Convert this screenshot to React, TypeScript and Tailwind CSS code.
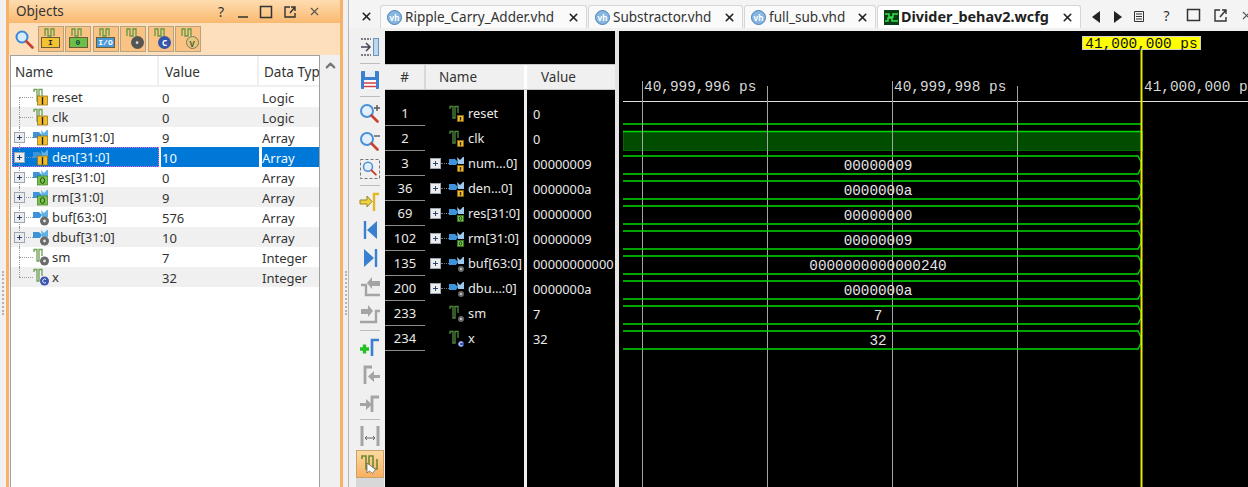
import type { ReactNode } from 'react'
import { ChevronUp, X } from 'lucide-react'

const sans = "font-['Noto_Sans',sans-serif]"

type Kind = 'in' | 'out' | 'sig' | 'const'

const objects: { name: string; value: string; type: string; kind: Kind; bus?: boolean }[] = [
  { name: 'reset', value: '0', type: 'Logic', kind: 'in' },
  { name: 'clk', value: '0', type: 'Logic', kind: 'in' },
  { name: 'num[31:0]', value: '9', type: 'Array', kind: 'in', bus: true },
  { name: 'den[31:0]', value: '10', type: 'Array', kind: 'in', bus: true },
  { name: 'res[31:0]', value: '0', type: 'Array', kind: 'out', bus: true },
  { name: 'rm[31:0]', value: '9', type: 'Array', kind: 'out', bus: true },
  { name: 'buf[63:0]', value: '576', type: 'Array', kind: 'sig', bus: true },
  { name: 'dbuf[31:0]', value: '10', type: 'Array', kind: 'sig', bus: true },
  { name: 'sm', value: '7', type: 'Integer', kind: 'sig' },
  { name: 'x', value: '32', type: 'Integer', kind: 'const' },
]

const waves: { num: string; name: string; value: string; kind: Kind; bus?: boolean; text?: string }[] = [
  { num: '1', name: 'reset', value: '0', kind: 'in' },
  { num: '2', name: 'clk', value: '0', kind: 'in' },
  { num: '3', name: 'num…0]', value: '00000009', kind: 'in', bus: true, text: '00000009' },
  { num: '36', name: 'den…0]', value: '0000000a', kind: 'in', bus: true, text: '0000000a' },
  { num: '69', name: 'res[31:0]', value: '00000000', kind: 'out', bus: true, text: '00000000' },
  { num: '102', name: 'rm[31:0]', value: '00000009', kind: 'out', bus: true, text: '00000009' },
  { num: '135', name: 'buf[63:0]', value: '00000000000', kind: 'sig', bus: true, text: '0000000000000240' },
  { num: '200', name: 'dbu…:0]', value: '0000000a', kind: 'sig', bus: true, text: '0000000a' },
  { num: '233', name: 'sm', value: '7', kind: 'sig', text: '7' },
  { num: '234', name: 'x', value: '32', kind: 'const', text: '32' },
]

function Badge({ kind, small }: { kind: Kind; small?: boolean }) {
  const cx = small ? 11.5 : 9.5
  const cy = small ? 13.5 : 12.5
  const r = small ? 3 : 5
  if (kind === 'in' || kind === 'out') {
    const fill = kind === 'in' ? '#f4bc28' : '#78c34e'
    const line = kind === 'in' ? '#8a6a10' : '#3c7d22'
    return (
      <g>
        <rect x={cx - r} y={cy - r + (small ? 0 : 0.5)} width={r * 2} height={r * 2 - (small ? 0 : 1)} fill={fill} stroke={line} strokeWidth=".7" />
        {kind === 'in' ? (
          <path d={`M${cx} ${cy - r + 1.5}V${cy + r - 1}`} stroke="#222" strokeWidth="1.4" />
        ) : (
          <ellipse cx={cx} cy={cy} rx={r / 2.4} ry={r / 1.7} fill="none" stroke="#1d3d12" strokeWidth=".9" />
        )}
      </g>
    )
  }
  const x = small ? 12 : 11.5
  const y = small ? 14 : 13
  if (kind === 'const') {
    return (
      <g>
        <circle cx={x} cy={y} r={small ? 3 : 4.5} fill="#3a55b0" />
        <path d={`M${x + 1.5} ${y - 1.5}a2 2 0 1 0 0 3`} fill="none" stroke="#fff" strokeWidth=".9" />
      </g>
    )
  }
  return (
    <g>
      <circle cx={x} cy={y} r={small ? 3 : 4.5} fill="#6a6a6a" />
      <circle cx={x} cy={y} r={small ? 0.9 : 1.4} fill="#e4e4e4" />
    </g>
  )
}

function SignalIcon({ kind, bus, small }: { kind: Kind; bus?: boolean; small?: boolean }) {
  return (
    <svg width="16" height="18" viewBox="0 0 16 18" className="shrink-0">
      {bus ? (
        <g>
          <path d="M0 4h6l3 3-2 3H0z" fill="#3d94dc" />
          <path d="M8 2l3 3 3-3h1v7h-6z" fill={small ? '#9cc8ec' : '#5fb0e4'} />
        </g>
      ) : (
        <path d="M1 4V1.5h3V13h2V1.5h3V8" fill="none" stroke={small ? '#4f8a3a' : '#6d9e55'} strokeWidth="1.3" />
      )}
      <Badge kind={kind} small={small} />
    </svg>
  )
}

function Expander() {
  return (
    <span className="relative block w-[11px] h-[11px] border border-[#9aa6b2] bg-[#ececec] shrink-0">
      <span className="absolute left-[2px] top-[4px] w-[5px] h-px bg-[#2c4470]" />
      <span className="absolute left-[4px] top-[2px] w-px h-[5px] bg-[#2c4470]" />
    </span>
  )
}

function FilterButton({ kind, label }: { kind: string; label: string }) {
  const boxes: Record<string, string> = {
    I: 'bg-[#f3c230] text-[#222]',
    O: 'bg-[#6cc04a] text-[#143]',
    IO: 'bg-[#4a9ad8] text-white',
  }
  return (
    <div className="w-[26px] h-[26px] bg-[#fac383] border border-[#b9a27e] flex flex-col items-center shrink-0">
      <svg width="18" height="9" viewBox="0 0 18 9" className="shrink-0 mt-px">
        <path d="M3 8V1h3v7h3V1h3v7" fill="none" stroke="#5f9a45" strokeWidth="1.3" />
      </svg>
      {boxes[kind] ? (
        <span className={`${boxes[kind]} w-[19px] h-[11px] border border-[#6b5b3a] text-[8px] leading-[9px] text-center font-['Liberation_Mono',monospace] font-bold`}>{label}</span>
      ) : (
        <span
          className={`w-[13px] h-[13px] -mt-[1px] ml-[8px] rounded-full text-[8px] leading-[13px] text-center font-bold ${
            kind === 'dot' ? 'bg-[#555] text-[#ddd]' : kind === 'C' ? 'bg-[#3355aa] text-white' : 'bg-[#e3c878] text-[#554] border border-[#776] leading-[11px]'
          }`}
        >
          {label}
        </span>
      )}
    </div>
  )
}

function Search() {
  return (
    <svg width="21" height="21" viewBox="0 0 21 21" className="shrink-0">
      <circle cx="8" cy="8" r="5.5" fill="#d6ecfb" stroke="#3a8ad8" strokeWidth="2" />
      <path d="M12.5 12.5l6 6" stroke="#c8402c" strokeWidth="2.6" strokeLinecap="round" />
    </svg>
  )
}

function Grip() {
  return <div className="w-[2px] h-[44px] mt-[271px] border-l-2 border-dotted border-[#b4b4b4]" />
}

function ObjectsPanel() {
  return (
    <div className="w-[343px] shrink-0 h-full flex">
      <div className="w-[6px] shrink-0 flex justify-center"><Grip /></div>
      <div className="flex-1 flex flex-col border-x-[3px] border-[#f8b268] bg-[#f0f0f0] min-h-0">
        <div className="h-[23px] shrink-0 flex items-center justify-between bg-gradient-to-b from-[#fddcb0] to-[#fab96f] pl-[7px] pr-[19px]">
          <span className={`${sans} text-[13.5px] text-[#333]`}>Objects</span>
          <div className="flex items-center text-[#333]">
            <span className={`w-[22px] text-center text-[14px] ${sans}`}>?</span>
            <svg width="22" height="16" viewBox="0 0 22 16"><path d="M6 13h10" stroke="#333" strokeWidth="1.5" /></svg>
            <svg width="24" height="16" viewBox="0 0 24 16"><rect x="6.5" y="2.5" width="11" height="11" fill="none" stroke="#333" strokeWidth="1.5" /></svg>
            <svg width="24" height="16" viewBox="0 0 24 16"><path d="M12 3H7v10h10V9M12 9l5-6M13 3h4v4" fill="none" stroke="#333" strokeWidth="1.4" /></svg>
            <X size={13} className="ml-[6px] text-[#555]" />
          </div>
        </div>
        <div className="h-[32px] shrink-0 flex items-center gap-[1.5px] bg-[#fde0bb] pl-[5px]">
          <div className="mr-[1px] w-[21px]"><Search /></div>
          <FilterButton kind="I" label="I" />
          <FilterButton kind="O" label="0" />
          <FilterButton kind="IO" label="I/O" />
          <FilterButton kind="dot" label="•" />
          <FilterButton kind="C" label="C" />
          <FilterButton kind="V" label="V" />
        </div>
        <div className="flex-1 flex min-h-0 pl-px">
          <div className={`w-[310px] bg-white border-x border-t border-[#a0a0a0] ${sans} text-[13px] text-[#333] overflow-hidden`}>
            <div className="flex h-[31px] items-center border-b-2 border-[#f0f0f0] text-[13.5px]">
              <span className="w-[148px] pl-[4px] border-r-2 border-[#f0f0f0] h-full leading-[33px]">Name</span>
              <span className="w-[100px] pl-[6px] border-r-2 border-[#f0f0f0] h-full leading-[33px]">Value</span>
              <span className="flex-1 pl-[5px] whitespace-nowrap overflow-hidden leading-[33px] h-full">Data Type</span>
            </div>
            {objects.map((o, i) => {
              const selected = o.name === 'den[31:0]'
              return (
                <div key={o.name} className={`relative flex h-[20px] items-center ${selected ? 'text-[#f2f8ff]' : i % 2 ? 'bg-[#f0f0f0]' : 'bg-white'}`}>
                  <div className={`relative w-[147px] ml-px h-full flex items-center ${selected ? 'bg-[#0078d7] outline-1 outline-dotted outline-[#e860f0] -outline-offset-1' : ''}`}>
                    <span className={`absolute left-[7px] w-px border-l border-dotted border-[#9a9a9a] ${i === 0 ? 'top-[10px] bottom-0' : i === objects.length - 1 ? 'top-0 h-[10px]' : 'top-0 bottom-0'}`} />
                    <span className="absolute left-[7px] top-[10px] w-[14px] border-t border-dotted border-[#9a9a9a]" />
                    <span className="relative w-[14px] pl-[2px] shrink-0">{o.bus && <Expander />}</span>
                    <span className="w-[7px] shrink-0" />
                    <span className="relative"><SignalIcon kind={o.kind} bus={o.bus} /></span>
                    <span className="ml-[3px] leading-[22px]">{o.name}</span>
                  </div>
                  <div className={`w-[98px] h-full ml-[2px] pl-px leading-[22px] ${selected ? 'bg-[#0078d7]' : ''}`}>{o.value}</div>
                  <div className={`flex-1 h-full ml-[3px] leading-[22px] ${selected ? 'bg-[#0078d7]' : ''}`}>{o.type}</div>
                </div>
              )
            })}
          </div>
          <div className="w-[20px] flex justify-center pt-[3px]">
            <ChevronUp size={15} strokeWidth={3.5} className="text-[#777]" />
          </div>
        </div>
      </div>
    </div>
  )
}

function Tab({ label, active, icon = 'vh', width }: { label: string; active?: boolean; icon?: string; width: string }) {
  return (
    <div className={`${width} h-[23px] shrink-0 flex items-center pl-[6px] pr-[6px] border border-b-0 border-[#d6d6d6] rounded-t-[3px] ${active ? 'bg-white' : 'bg-[#fafafa]'}`}>
      {icon === 'vh' ? (
        <span className="w-[15px] h-[15px] rounded-full bg-[#86b6e2] border border-[#4d82b8] text-white text-[8px] leading-[13px] text-center shrink-0 font-bold">vh</span>
      ) : (
        <svg width="15" height="15" viewBox="0 0 15 15" className="shrink-0">
          <rect width="15" height="15" fill="#0b3d14" />
          <path d="M1 4h4v3h4V4h5M1 11h3V8h4v3h6" fill="none" stroke="#35e04c" strokeWidth="1.5" />
        </svg>
      )}
      <span className={`flex-1 whitespace-nowrap ${sans} ${active ? 'ml-[2px] text-[14.4px] font-bold text-[#222]' : 'ml-[3px] text-[13.5px] text-[#333]'}`}>{label}</span>
      <X size={13} strokeWidth={3} className="text-[#222] shrink-0" />
    </div>
  )
}

function TabBar() {
  return (
    <div className="h-[31px] shrink-0 flex items-end bg-[#f4f4f4] border-b-[3px] border-[#f0f0f0]">
      <div className="w-[31px] h-[23px] flex items-center justify-center pl-[3px] shrink-0">
        <X size={13} strokeWidth={3} className="text-[#222]" />
      </div>
      <div className="flex gap-[1px] items-end">
        <Tab label="Ripple_Carry_Adder.vhd" width="w-[207px]" />
        <Tab label="Substractor.vhd" width="w-[155px]" />
        <Tab label="full_sub.vhd" width="w-[132px]" />
        <Tab label="Divider_behav2.wcfg" width="w-[204px]" icon="wcfg" active />
      </div>
      <div className="flex items-center h-[23px] ml-[11px] gap-[12px] shrink-0">
        <svg width="9" height="12" viewBox="0 0 9 12"><path d="M8 0v12L0 6z" fill="#222" /></svg>
        <svg width="9" height="12" viewBox="0 0 9 12"><path d="M1 0v12l8-6z" fill="#222" /></svg>
        <svg width="10" height="11" viewBox="0 0 10 11"><path d="M.5.5h9v10h-9zM2 3h6M2 5.5h6M2 8h6" fill="none" stroke="#333" /></svg>
      </div>
      <div className="flex items-center h-[25px] ml-[9px] shrink-0">
        <span className={`w-[27px] text-center text-[14px] text-[#333] ${sans}`}>?</span>
        <svg width="27" height="16" viewBox="0 0 27 16"><rect x="7.5" y="1.5" width="12" height="11" fill="none" stroke="#333" strokeWidth="1.5" /></svg>
        <svg width="28" height="16" viewBox="0 0 28 16"><path d="M13 2H8v11h11V9M13 9l6-7M15 2h4v4" fill="none" stroke="#333" strokeWidth="1.4" /></svg>
        <X size={13} className="ml-[5px] text-[#555] shrink-0" />
      </div>
    </div>
  )
}

function ToolIcon({ children, active }: { children: ReactNode; active?: boolean }) {
  return (
    <div className={`w-[28px] h-[28px] flex items-center justify-center shrink-0 ${active ? 'bg-gradient-to-b from-[#fcd9a0] to-[#f8b060] border border-[#caa26a]' : ''}`}>
      <svg width="22" height="22" viewBox="0 0 22 22">{children}</svg>
    </div>
  )
}

function Sep() {
  return <div className="w-[20px] h-px bg-[#bdbdbd] my-[2px] shrink-0" />
}

function Magnifier({ sign }: { sign?: string }) {
  return (
    <g>
      <circle cx="8" cy="9" r="6" fill="#e2f0fb" stroke="#4a90d8" strokeWidth="2" />
      <path d="M12.5 13.5l6 6" stroke="#c8402c" strokeWidth="2.6" strokeLinecap="round" />
      {sign === '+' && <path d="M15 6h6M18 3v6" stroke="#555" strokeWidth="1.4" />}
      {sign === '-' && <path d="M15 6h6" stroke="#555" strokeWidth="1.4" />}
    </g>
  )
}

function ToolStrip() {
  const gray = '#a4a4a4'
  return (
    <div className="w-[36px] shrink-0 h-full bg-[#f0f0f0] flex flex-col items-center pt-[2px] pl-[6px] overflow-hidden">
      <ToolIcon>
        <path d="M2 3h10M2 19h10" fill="none" stroke="#556" strokeWidth="1.5" strokeDasharray="2 1" />
        <path d="M2 11h9M7 7l4 4-4 4" fill="none" stroke="#445" strokeWidth="1.5" />
        <rect x="14.5" y="2.5" width="5" height="17" fill="#bcd8f0" stroke="#6c93b8" />
      </ToolIcon>
      <Sep />
      <ToolIcon>
        <rect x="2" y="2" width="18" height="18" rx="1" fill="#3a7fd0" />
        <rect x="6" y="2" width="10" height="6" fill="#e8eef5" />
        <rect x="5" y="11" width="12" height="9" fill="#fff" />
        <path d="M5 14h12M5 17.5h12" stroke="#d04040" strokeWidth="1.6" />
      </ToolIcon>
      <Sep />
      <ToolIcon><Magnifier sign="+" /></ToolIcon>
      <ToolIcon><Magnifier sign="-" /></ToolIcon>
      <ToolIcon>
        <rect x="1.5" y="1.5" width="19" height="19" fill="none" stroke="#777" strokeDasharray="3 2" />
        <g transform="translate(3 2) scale(.75)"><Magnifier /></g>
      </ToolIcon>
      <Sep />
      <ToolIcon>
        <path d="M1 9h7V5l5 5.5L8 16v-3H1z" fill="#f0d040" stroke="#998820" />
        <path d="M15 20V3h5" fill="none" stroke="#e0b820" strokeWidth="2.4" />
      </ToolIcon>
      <ToolIcon>
        <path d="M6 2v18" stroke="#3a80d0" strokeWidth="2.4" />
        <path d="M18 2v18L8 11z" fill="#3a80d0" />
      </ToolIcon>
      <ToolIcon>
        <path d="M17 2v18" stroke="#3a80d0" strokeWidth="2.4" />
        <path d="M5 2v18l10-9z" fill="#3a80d0" />
      </ToolIcon>
      <ToolIcon>
        <path d="M2 10h5v10h14" fill="none" stroke={gray} strokeWidth="2.4" />
        <path d="M21 6H13V2L8 8l5 6v-3h8z" fill={gray} />
      </ToolIcon>
      <ToolIcon>
        <path d="M1 19h16V8h4" fill="none" stroke={gray} strokeWidth="2.4" />
        <path d="M2 6h7V2l5 6-5 6v-3H2z" fill={gray} />
      </ToolIcon>
      <Sep />
      <ToolIcon>
        <path d="M1 13h9M5.5 8.5v9" stroke="#25c025" strokeWidth="3.4" />
        <path d="M13 20V4h7" fill="none" stroke="#3a80d0" strokeWidth="2.6" />
      </ToolIcon>
      <ToolIcon>
        <path d="M6 20V3h7" fill="none" stroke={gray} strokeWidth="2.8" />
        <path d="M21 11h-6V7l-6 5.5 6 5.5v-4h6z" fill={gray} />
      </ToolIcon>
      <ToolIcon>
        <path d="M13 20V5h7" fill="none" stroke={gray} strokeWidth="2.8" />
        <path d="M1 11h6V7l6 5.5L7 18v-4H1z" fill={gray} />
      </ToolIcon>
      <Sep />
      <ToolIcon>
        <path d="M3 1v20M19 1v20" stroke={gray} strokeWidth="3" />
        <path d="M7 13h8M8 11l-2 2 2 2M14 11l2 2-2 2" fill="none" stroke="#666" />
      </ToolIcon>
      <ToolIcon active>
        <path d="M3 6V3h4v13h3V3h4v13h4V6" fill="none" stroke="#6d8a30" strokeWidth="1.6" />
        <path d="M8 10v10l2.5-2 3 2.5 3-4z" fill="#fff" stroke="#555" strokeWidth=".7" />
      </ToolIcon>
      <div className="w-[28px] h-[20px] bg-[#d8d8d8] shrink-0" />
    </div>
  )
}

function NameColumns() {
  return (
    <div className="w-[230px] shrink-0 h-full flex flex-col bg-black">
      <div className="h-[33px] shrink-0" />
      <div className={`h-[26px] shrink-0 flex bg-[#f0f0f0] border-y border-[#c8c8c8] ${sans} text-[13.5px] text-[#333]`}>
        <span className="w-[41px] text-center leading-[24px] border-r-2 border-[#d8d8d8]">#</span>
        <span className="w-[98px] pl-[13px] leading-[24px]">Name</span>
        <span className="w-[3px] bg-white" />
        <span className="flex-1 pl-[14px] leading-[24px]">Value</span>
      </div>
      <div className={`flex-1 flex min-h-0 ${sans} text-[12.8px] text-[#eaeaea] pt-[11px]`}>
        <div className="w-[139px] shrink-0">
          {waves.map(w => (
            <div key={w.num} className="flex h-[25px] items-center">
              <span className="w-[40px] h-full text-center text-[13px] leading-[25px] border-b border-[#8c8c8c] shrink-0">{w.num}</span>
              <span className="relative w-[19px] ml-[5px] shrink-0 flex items-center">
                {w.bus && <Expander />}
                {w.bus && <span className="w-[8px] border-t border-dotted border-[#777]" />}
              </span>
              <SignalIcon kind={w.kind} bus={w.bus} small />
              <span className="ml-[3px] whitespace-nowrap">{w.name}</span>
            </div>
          ))}
        </div>
        <div className="w-[3px] bg-[#eeeeee] -mt-[11px] shrink-0" />
        <div className="flex-1 pl-[6px] overflow-hidden">
          {waves.map(w => (
            <div key={w.num} className="h-[25px] leading-[26px] whitespace-nowrap">{w.value}</div>
          ))}
        </div>
      </div>
    </div>
  )
}

const gridLines = [
  { x: 642, top: 81 },
  { x: 767, top: 86 },
  { x: 892, top: 81 },
  { x: 1017, top: 86 },
]

// wave canvas starts at x=619, y=31 in page coordinates
function WaveCanvas() {
  const ox = 619
  const oy = 31
  const mono = { fontFamily: "'Liberation Mono', monospace", fontSize: 14.4 }
  const busText = { fontFamily: "'Liberation Mono', monospace", fontSize: 14.3 }
  return (
    <svg width="629" height="456" viewBox={`${ox} ${oy} 629 456`} className="block shrink-0">
      <rect x={ox} y={oy} width="629" height="456" fill="#000" />
      <path d="M623 101.5H1248" stroke="#e0e0e0" strokeWidth="1" />
      <rect x="623.5" y="131.5" width="519" height="19" fill="#004d00" stroke="#006a00" strokeWidth="1" />
      <path d="M623 124H1141M623 131.5H1141" stroke="#00dc00" strokeWidth="1.3" />
      {gridLines.map(g => (
        <path key={g.x} d={`M${g.x}.5 ${g.top}V487`} stroke="#a4a4a4" strokeWidth="1" />
      ))}
      <text x="644" y="91" fill="#d8d8d8" style={mono}>40,999,996 ps</text>
      <text x="894" y="91" fill="#d8d8d8" style={mono}>40,999,998 ps</text>
      <text x="1144" y="91" fill="#d8d8d8" style={mono}>41,000,000 ps</text>
      {waves.slice(2).map((w, i) => {
        const top = 156 + i * 25
        const bottom = top + 18
        return (
          <g key={w.num}>
            <path d={`M623 ${top}H1138L1141 ${top + 6}V${bottom - 6}L1138 ${bottom}H623`} fill="none" stroke="#00dc00" strokeWidth="1.3" />
            <text x="878" y={top + 13.5} textAnchor="middle" fill="#e4e4e4" style={busText}>{w.text}</text>
          </g>
        )
      })}
      <path d="M1141.5 50V487" stroke="#e8e800" strokeWidth="2" />
      <rect x="1082.5" y="36.5" width="118" height="13" fill="#ffff00" stroke="#d0d0d0" />
      <text x="1141.5" y="48" textAnchor="middle" fill="#111" style={mono}>41,000,000 ps</text>
    </svg>
  )
}

export default function App() {
  return (
    <div className="w-[1248px] h-[487px] flex overflow-hidden bg-[#f0f0f0]">
      <ObjectsPanel />
      <div className="w-[5px] shrink-0 flex justify-center"><Grip /></div>
      <div className="flex-1 min-w-0 flex flex-col border-l border-[#b8b8b8]">
        <TabBar />
        <div className="flex-1 flex min-h-0">
          <ToolStrip />
          <NameColumns />
          <div className="w-[4px] shrink-0 bg-[#e4e4e4]" />
          <WaveCanvas />
        </div>
      </div>
    </div>
  )
}
